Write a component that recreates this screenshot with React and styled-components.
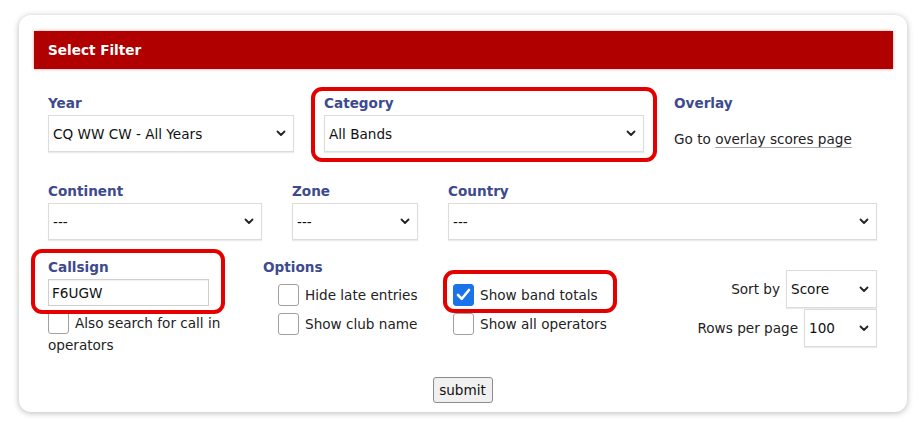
import React from 'react'
import styled, { createGlobalStyle } from 'styled-components';

const GlobalStyle = createGlobalStyle`
  body {
    margin: 0;
    background: #ffffff;
    font-family: "DejaVu Sans", Verdana, sans-serif;
  }
`;

const Page = styled.div`
  padding: 15px 13px 16px 19px;
`;

const Card = styled.div`
  width: 888px;
  background: #fff;
  border-radius: 12px;
  box-shadow: 0 1px 6px rgba(0, 0, 0, 0.28);
  padding: 16px 14px 9px 15px;
  box-sizing: border-box;
`;

const Header = styled.div`
  background-color: #b00000;
  color: #fff;
  font-weight: bold;
  font-size: 13.6px;
  height: 38px;
  display: flex;
  align-items: center;
  padding-left: 14px;
  box-shadow: 0 0 3px rgba(200, 0, 0, 0.4);
`;

const Body = styled.div`
  padding: 26px 0 0 14px;
  width: 829px;
  font-size: 13.6px;
  color: #222;
`;

const Row = styled.div`
  display: flex;
  gap: ${(props) => props.gap ?? 30}px;
  margin-bottom: ${(props) => props.mb || 0}px;
`;

const Field = styled.div`
  width: ${(props) => props.w}px;
  flex-shrink: 0;
  display: flex;
  flex-direction: column;
  position: relative;
`;

const Label = styled.div`
  color: #3d4b8e;
  font-weight: bold;
  font-size: 13.6px;
  height: 20px;
  line-height: 16px;
`;

const Highlight = styled.div`
  position: relative;
  &::before {
    content: "";
    position: absolute;
    top: ${(props) => props.t}px;
    left: ${(props) => props.l}px;
    right: ${(props) => props.r}px;
    bottom: ${(props) => props.b}px;
    border: 4px solid #e40000;
    border-radius: 11px;
    pointer-events: none;
  }
`;

const SelectBox = styled.div`
  height: ${(props) => props.h || 37}px;
  width: ${(props) => (props.w ? props.w + 'px' : 'auto')};
  box-sizing: border-box;
  border: 1px solid #dcdcdc;
  box-shadow: 0 1px 1px rgba(0, 0, 0, 0.08);
  background: #fff;
  display: flex;
  align-items: center;
  justify-content: space-between;
  padding: 0 7px 0 4px;
  font-size: 13.6px;
  color: #111;
`;

const Chevron = () => (
  <svg width="10" height="7" viewBox="0 0 10 7">
    <path d="M1.5 1.5 L5 5 L8.5 1.5" fill="none" stroke="#222" strokeWidth="1.8" strokeLinecap="round" strokeLinejoin="round" />
  </svg>
);

const Select = ({ value, h, w }) => (
  <SelectBox h={h} w={w}>
    <span>{value}</span>
    <Chevron />
  </SelectBox>
);

const OverlayText = styled.div`
  margin-top: 16px;
  font-size: 13.6px;
  color: #222;
`;

const Link = styled.span`
  text-decoration: underline;
  text-decoration-color: #aaa;
  text-underline-offset: 3px;
`;

const TextInput = styled.div`
  height: 27px;
  width: 161px;
  box-sizing: border-box;
  border: 1px solid #cfcfcf;
  box-shadow: inset 0 1px 1px rgba(0, 0, 0, 0.06);
  display: flex;
  align-items: center;
  padding-left: 3px;
  font-size: 13.6px;
  color: #111;
`;

const CheckRow = styled.div`
  display: flex;
  align-items: center;
  gap: 6px;
  height: ${(props) => props.h || 29}px;
  line-height: 22px;
`;

const Box = styled.div`
  width: 21px;
  height: 22px;
  flex-shrink: 0;
  box-sizing: border-box;
  border-radius: 3px;
  border: 1px solid ${(props) => (props.checked ? '#1a73e8' : '#a0a0a0')};
  background: ${(props) => (props.checked ? '#1a73e8' : '#fff')};
  display: flex;
  align-items: center;
  justify-content: center;
`;

const Check = ({ checked }) => (
  <Box checked={checked}>
    {checked && (
      <svg width="15" height="13" viewBox="0 0 15 13">
        <path d="M2 7 L5.8 10.8 L13 2" fill="none" stroke="#fff" strokeWidth="2.6" strokeLinecap="round" strokeLinejoin="round" />
      </svg>
    )}
  </Box>
);

const AlsoSearch = styled.div`
  margin-top: 6px;
  line-height: 22px;
`;

const AlsoLine = styled.div`
  display: flex;
  align-items: center;
  gap: 6px;
`;

const OptionsCol = styled.div`
  display: flex;
  flex-direction: column;
  padding-top: 21px;
`;

const OptionsBlock = styled.div`
  display: flex;
  flex-direction: column;
  padding-left: 15px;
  padding-top: 1px;
`;

const SortCol = styled.div`
  margin-left: auto;
  display: flex;
  flex-direction: column;
  align-items: flex-end;
  padding-top: 11px;
`;

const SortRow = styled.div`
  display: flex;
  align-items: center;
  gap: 6px;
  margin-bottom: 1px;
`;

const Footer = styled.div`
  display: flex;
  justify-content: center;
  margin-top: 21px;
`;

const SubmitButton = styled.button`
  font-family: "DejaVu Sans", Verdana, sans-serif;
  font-size: 13.6px;
  height: 26px;
  width: 60px;
  padding: 0;
  background: #f0f0f0;
  border: 1px solid #8c8c8c;
  border-radius: 3px;
  color: #111;
`;

const App = () => {
  return (
    <>
      <GlobalStyle />
      <Page>
        <Card>
          <Header>Select Filter</Header>
          <Body>
            <Row mb={31}>
              <Field w={246}>
                <Label>Year</Label>
                <Select value="CQ WW CW - All Years" />
              </Field>
              <Highlight t={-8} l={-13} r={-13} b={-10}>
                <Field w={320}>
                  <Label>Category</Label>
                  <Select value="All Bands" />
                </Field>
              </Highlight>
              <Field w={203}>
                <Label>Overlay</Label>
                <OverlayText>
                  Go to <Link>overlay scores page</Link>
                </OverlayText>
              </Field>
            </Row>
            <Row gap={30} mb={19}>
              <Field w={214}>
                <Label>Continent</Label>
                <Select value="---" />
              </Field>
              <Field w={126}>
                <Label>Zone</Label>
                <Select value="---" />
              </Field>
              <Field w={429}>
                <Label>Country</Label>
                <Select value="---" />
              </Field>
            </Row>
            <Row gap={0}>
              <Field w={215}>
                <Highlight t={-10} l={-17} r={38} b={-8}>
                  <Label>Callsign</Label>
                  <TextInput>F6UGW</TextInput>
                </Highlight>
                <AlsoSearch>
                  <AlsoLine>
                    <Check />
                    <span>Also search for call in</span>
                  </AlsoLine>
                  operators
                </AlsoSearch>
              </Field>
              <Field w={190}>
                <Label>Options</Label>
                <OptionsBlock>
                  <CheckRow>
                    <Check />
                    <span>Hide late entries</span>
                  </CheckRow>
                  <CheckRow>
                    <Check />
                    <span>Show club name</span>
                  </CheckRow>
                </OptionsBlock>
              </Field>
              <OptionsCol>
                <Highlight t={-10} l={-10} r={-10} b={-4}>
                  <CheckRow>
                    <Check checked />
                    <span>Show band totals</span>
                  </CheckRow>
                </Highlight>
                <CheckRow>
                  <Check />
                  <span>Show all operators</span>
                </CheckRow>
              </OptionsCol>
              <SortCol>
                <SortRow>
                  <span>Sort by</span>
                  <Select value="Score" h={38} w={91} />
                </SortRow>
                <SortRow>
                  <span>Rows per page</span>
                  <Select value="100" h={38} w={73} />
                </SortRow>
              </SortCol>
            </Row>
            <Footer>
              <SubmitButton>submit</SubmitButton>
            </Footer>
          </Body>
        </Card>
      </Page>
    </>
  )
}

export default App
